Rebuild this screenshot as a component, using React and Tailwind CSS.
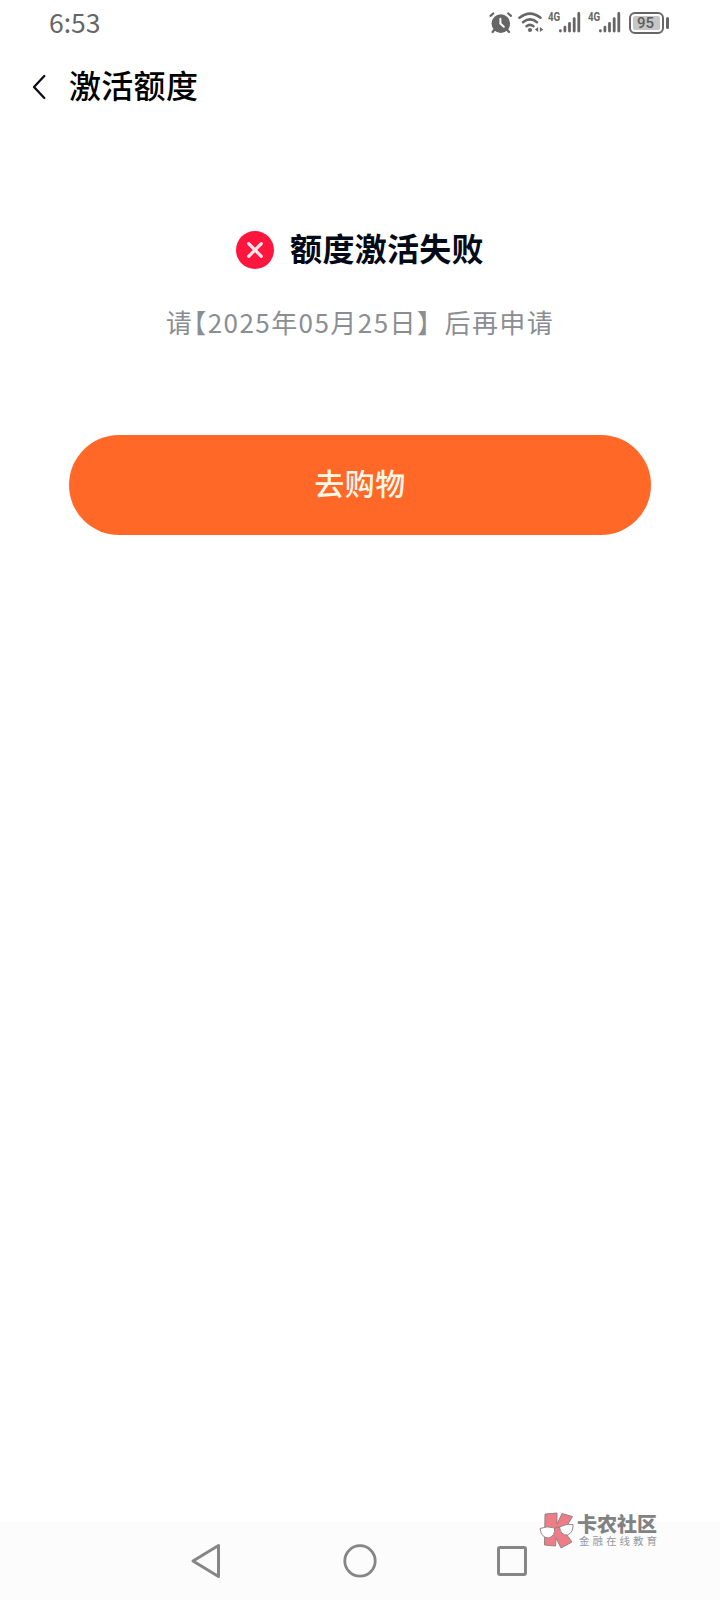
const NAV_STROKE = "#868686";

function AlarmIcon() {
  return (
    <svg width="24" height="24" viewBox="0 0 24 24" fill="none" strokeLinecap="round">
      <circle cx="11.8" cy="12.6" r="9.3" fill="#666" />
      <path d="M5.6 18.5 L3.6 21 M18 18.5 L20 21" stroke="#666" strokeWidth="2.2" />
      <path d="M1.5 4.8 L4.2 2.5 M22 4.8 L19.3 2.5" stroke="#666" strokeWidth="2.2" />
      <path d="M11.4 7.8 V12.6 L14.8 15.8" stroke="#fff" strokeWidth="2" />
    </svg>
  );
}

function WifiIcon() {
  return (
    <svg width="27" height="24" viewBox="0 0 27 24" fill="none" stroke="#666" strokeWidth="2.5" strokeLinecap="round">
      <path d="M1.5 6.8 Q12 -1.6 22.5 6.8" />
      <path d="M5 11.2 Q12 5.6 19 11.2" />
      <path d="M8.5 15.3 Q12 12.5 15.5 15.3" />
      <circle cx="12" cy="19" r="2.1" fill="#666" stroke="none" />
      <path d="M20.2 16 V21 L16.9 18.5 Z M21.9 16 V21 L25.2 18.5 Z" fill="#666" stroke="none" />
    </svg>
  );
}

function Signal() {
  return (
    <div className="flex h-6">
      <span className="w-[11px] font-['Roboto',sans-serif] text-[13px] leading-[11px] font-bold text-[#666]">
        <span className="inline-block origin-left scale-x-75">4G</span>
      </span>
      <svg width="22" height="24" viewBox="0 0 22 24" stroke="#666" strokeWidth="2.8" strokeLinecap="round">
        <path d="M1.4 19.6 V20 M5.9 16.2 V20 M10.5 12.3 V20 M15.2 7.6 V20 M19.8 2.4 V20" />
      </svg>
    </div>
  );
}

function Battery() {
  return (
    <div className="flex items-center">
      <div className="flex h-[22px] w-[35px] rounded-md border-2 border-[#666] p-[2px]">
        <span className="flex w-full items-center justify-center rounded-[2px] bg-[#c6c6c6] pr-[2px] font-['Roboto',sans-serif] text-[15px] leading-none font-medium text-[#5c5c5c]">
          95
        </span>
      </div>
      <span className="ml-[2px] h-3 w-[3px] rounded-full bg-[#666]" />
    </div>
  );
}

function StatusBar() {
  return (
    <div className="flex h-[45px] items-start justify-between pr-[51px] pl-[49px]">
      <span className="mt-[6px] font-['Noto_Sans_CJK_SC',sans-serif] text-[26.5px] leading-[32px] text-[#666]">6:53</span>
      <div className="mt-[11px] flex items-center">
        <AlarmIcon />
        <div className="ml-[5px]"><WifiIcon /></div>
        <div className="ml-[3px]"><Signal /></div>
        <div className="ml-[7px]"><Signal /></div>
        <div className="ml-[8px]"><Battery /></div>
      </div>
    </div>
  );
}

function Header() {
  return (
    <header className="flex h-[84px] items-center pl-8">
      <svg width="14" height="26" viewBox="0 0 14 26" fill="none" stroke="#0b0b18" strokeWidth="2.3" strokeLinecap="round" strokeLinejoin="round">
        <path d="M12.3 2 L2 13 L12.3 24" />
      </svg>
      <h1 className="mb-[6px] ml-[23px] text-[32px] leading-[40px] font-medium tracking-[0.3px] text-black">激活额度</h1>
    </header>
  );
}

function NavBar() {
  return (
    <nav className="flex h-[78px] items-center justify-between bg-[#fcfcfc] pr-[193px] pl-[190px]">
      <svg width="32" height="36" viewBox="0 0 32 36" fill="none" stroke={NAV_STROKE} strokeWidth="3" strokeLinejoin="round">
        <path d="M28.5 2.5 V33.5 L3 18 Z" />
      </svg>
      <svg width="34" height="34" viewBox="0 0 34 34" fill="none" stroke={NAV_STROKE} strokeWidth="2.8">
        <circle cx="17" cy="16.9" r="15.2" />
      </svg>
      <div className="h-[30px] w-[30px] rounded-[3px] border-[3px] border-[#868686]" />
    </nav>
  );
}

function Watermark() {
  return (
    <div className="absolute right-[60px] bottom-[50px] flex h-[38px] items-start">
      <svg width="36" height="38" viewBox="0 0 36 38" stroke="#8a7d80" strokeWidth="0.9" strokeLinejoin="round">
        <path d="M6 2 L18 1 L18 12 L23 1.5 L33.5 4.5 L25 19 L33 30 L22 36 L17 26 L16.5 34 L5.5 33 Z" fill="#ed7d86" />
        <path d="M1 16.5 Q8 13.5 15.5 16 Q16.5 24 9.5 26 Q2.5 26 1 16.5 Z" fill="#fff" />
        <path d="M20.5 15 Q27 11.5 34 12.5 Q34.5 20.5 28.5 23 Q21.5 23.5 20.5 15 Z" fill="#fff" />
        <path d="M15.5 16.5 Q17.5 14 20.5 15.5" fill="none" />
      </svg>
      <div className="ml-[2px] flex flex-col whitespace-nowrap">
        <span className="mt-px h-[21px] text-[20px] leading-[21px] font-black text-[#828282]">卡农社区</span>
        <span className="pl-[2px] text-[10.5px] leading-[13px] tracking-[3px] text-[#999]">金融在线教育</span>
      </div>
    </div>
  );
}

export default function App() {
  return (
    <div className="relative flex h-[1600px] w-[720px] flex-col bg-white font-['Noto_Sans_CJK_SC',sans-serif]">
      <StatusBar />
      <Header />

      <main className="flex flex-1 flex-col items-center pt-[100px]">
        <div className="flex h-10 items-center">
          <svg className="mt-[2px]" width="38" height="38" viewBox="0 0 38 38">
            <circle cx="19" cy="19" r="19" fill="#fe163f" />
            <path d="M12.7 12.7 L25.3 25.3 M25.3 12.7 L12.7 25.3" stroke="#ffe6ea" strokeWidth="3.2" strokeLinecap="round" />
          </svg>
          <h2 className="mb-[4px] ml-4 text-[32px] leading-[40px] font-bold tracking-[0.3px] text-[#050a18]">额度激活失败</h2>
        </div>

        <p className="mt-[33px] text-[26px] leading-[40px] tracking-[1.45px] text-[#8a8e93]">
          请<span className="[font-feature-settings:'halt']">【</span>2025年05月25日】后再申请
        </p>

        <button className="mt-[93px] flex h-[100px] w-[582px] items-center justify-center rounded-full bg-[#ff6827] pb-[6px] text-[30px] font-medium tracking-[0.5px] text-[#fff7e8]">
          去购物
        </button>
      </main>

      <NavBar />
      <Watermark />
    </div>
  );
}
